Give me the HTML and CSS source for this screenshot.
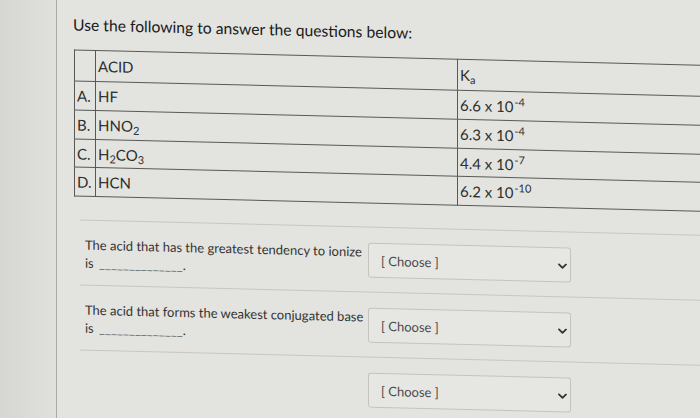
FILE: index.html
```html
<!DOCTYPE html>
<html lang="en">
<head>
<meta charset="utf-8">
<title>Quiz question</title>
<link rel="stylesheet" href="styles.css">
</head>
<body>
<div class="page">
  <aside class="sidebar"></aside>
  <main class="content">
    <p class="intro">Use the following to answer the questions below:</p>
    <table class="acids">
      <colgroup><col class="c-letter"><col class="c-acid"><col class="c-ka"></colgroup>
      <tr class="head"><td></td><td>ACID</td><td>K<sub>a</sub></td></tr>
      <tr><td>A.</td><td>HF</td><td>6.6 x 10<sup>-4</sup></td></tr>
      <tr><td>B.</td><td>HNO<sub>2</sub></td><td>6.3 x 10<sup>-4</sup></td></tr>
      <tr class="short"><td>C.</td><td>H<sub>2</sub>CO<sub>3</sub></td><td>4.4 x 10<sup>-7</sup></td></tr>
      <tr><td>D.</td><td>HCN</td><td>6.2 x 10<sup>-10</sup></td></tr>
    </table>
    <div class="questions">
      <div class="question">
        <p class="prompt">The acid that has the greatest tendency to ionize<br>is <span class="blank">______________</span>.</p>
        <div class="select"><span class="select-label">[ Choose ]</span><svg class="chevron" width="9" height="6" viewBox="0 0 9 6"><path d="M1 1l3.5 3.5L8 1"/></svg></div>
      </div>
      <div class="question">
        <p class="prompt">The acid that forms the weakest conjugated base<br>is <span class="blank">______________</span>.</p>
        <div class="select"><span class="select-label">[ Choose ]</span><svg class="chevron" width="9" height="6" viewBox="0 0 9 6"><path d="M1 1l3.5 3.5L8 1"/></svg></div>
      </div>
      <div class="question">
        <p class="prompt"></p>
        <div class="select"><span class="select-label">[ Choose ]</span><svg class="chevron" width="9" height="6" viewBox="0 0 9 6"><path d="M1 1l3.5 3.5L8 1"/></svg></div>
      </div>
    </div>
  </main>
</div>
</body>
</html>
```
FILE: styles.css
```css
html, body {
  margin: 0;
  padding: 0;
}
body {
  width: 700px;
  height: 418px;
  overflow: hidden;
  background: #e3e4e0;
  font-family: Lato, "Open Sans", sans-serif;
  color: #2b2b2b;
}
.page {
  display: flex;
  height: 418px;
}
.sidebar {
  flex: 0 0 56px;
  background: linear-gradient(90deg, #d6d7d3 0%, #dcddd9 60%, #e0e1dd 100%);
  border-right: 1px solid #a8a9a5;
}
.content {
  flex: 1;
  min-width: 0;
  padding: 14px 0 0 16px;
  transform: skewY(1.4deg);
  transform-origin: 0 0;
}
.intro {
  margin: 0;
  font-size: 15.7px;
  line-height: 20px;
  color: #1a1a1a;
  white-space: nowrap;
}
.acids {
  margin: 15px 0 0 1px;
  border-collapse: collapse;
  table-layout: fixed;
  width: 660px;
  font-size: 15px;
  color: #2e2e2e;
}
.c-letter { width: 21px; }
.c-acid { width: 362px; }
.c-ka { width: 277px; }
.acids td {
  border: 1px solid #585957;
  padding: 0 0 0 2px;
  height: 28px;
  line-height: 18px;
  vertical-align: middle;
  white-space: nowrap;
}
.acids .head td { height: 30px; }
.acids .short td { height: 27px; }
.acids sub {
  font-size: 11px;
  line-height: 0;
  vertical-align: -3px;
}
.acids sup {
  font-size: 11px;
  line-height: 0;
  vertical-align: 6px;
  margin-left: 1px;
}
.questions {
  margin: 23px 0 0 7px;
}
.question {
  display: flex;
  align-items: flex-start;
  border-top: 1px solid #c6c7c3;
  padding: 15px 0 13px 5px;
}
.prompt {
  flex: 0 0 283px;
  margin: 0;
  font-size: 13px;
  line-height: 18px;
  min-height: 36px;
  color: #333;
  white-space: nowrap;
}
.blank {
  color: #666;
  margin-left: 2px;
}
.select {
  flex: 0 0 auto;
  box-sizing: border-box;
  width: 203px;
  height: 35px;
  border: 1px solid #c3c4c0;
  border-radius: 3px;
  background: #e6e7e3;
  display: flex;
  align-items: center;
  justify-content: space-between;
  padding: 0 3px 0 12px;
}
.select-label {
  font-size: 13px;
  color: #4a4a4a;
}
.chevron {
  fill: none;
  stroke: #333;
  stroke-width: 1.8;
  stroke-linecap: round;
  stroke-linejoin: round;
  margin-top: 3px;
}
```
